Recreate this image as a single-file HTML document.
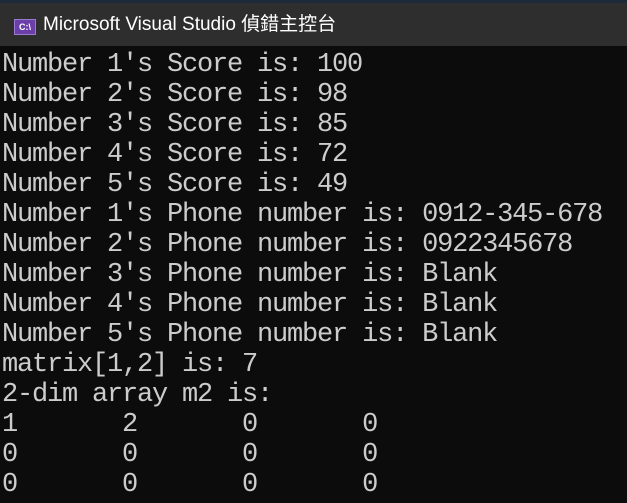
<!DOCTYPE html>
<html><head><meta charset="utf-8"><style>
html,body{margin:0;padding:0;width:627px;height:503px;overflow:hidden;background:#0c0c0c}
.top{position:absolute;left:0;top:0;width:627px;height:3px;background:#1e2a3a}
.bar{position:absolute;left:0;top:3px;width:627px;height:43px;background:#2e2e2e}
.icon{position:absolute;left:14px;top:16px;width:22px;height:16px;background:#6a3fa8;border:1px solid #9a7ad0;box-sizing:border-box;color:#fff;font:bold 9px "Liberation Sans",sans-serif;line-height:14px;text-align:center}
.title{position:absolute;left:43px;top:11px;color:#fff;font:19px "Liberation Sans","Noto Sans CJK TC",sans-serif;line-height:22px}
pre{position:absolute;left:2px;top:50px;margin:0;color:#cccccc;font-family:"Liberation Mono",monospace;font-size:27px;letter-spacing:-1.2px;line-height:30px}
</style></head><body>
<div class="top"></div>
<div class="bar"><div class="icon">C:\</div><div class="title">Microsoft Visual Studio 偵錯主控台</div></div>
<pre>Number 1's Score is: 100
Number 2's Score is: 98
Number 3's Score is: 85
Number 4's Score is: 72
Number 5's Score is: 49
Number 1's Phone number is: 0912-345-678
Number 2's Phone number is: 0922345678
Number 3's Phone number is: Blank
Number 4's Phone number is: Blank
Number 5's Phone number is: Blank
matrix[1,2] is: 7
2-dim array m2 is:
1       2       0       0
0       0       0       0
0       0       0       0</pre>
</body></html>
